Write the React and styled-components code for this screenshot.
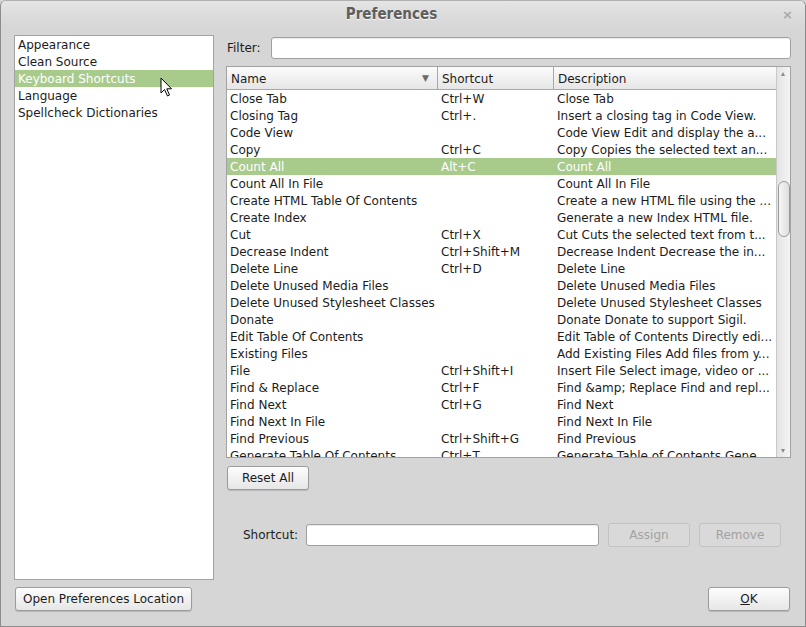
import React from "react";
import styled, { createGlobalStyle } from "styled-components";

const GlobalStyle = createGlobalStyle`
  html, body {
    margin: 0;
    padding: 0;
    background: #d6d6d6;
  }
  * {
    box-sizing: border-box;
  }
`;

const Window = styled.div`
  position: relative;
  width: 806px;
  height: 627px;
  background: #d6d6d6;
  border: 1px solid #8c8c8c;
  border-top-color: #b0b0b0;
  border-radius: 6px 6px 0 0;
  font-family: "DejaVu Sans", sans-serif;
  font-size: 12px;
  color: #1c1c1c;
  display: flex;
  flex-direction: column;
  overflow: hidden;
`;

const TitleBar = styled.div`
  height: 26px;
  flex: none;
  display: flex;
  align-items: center;
  justify-content: center;
  position: relative;
  background: linear-gradient(#e4e4e4, #d6d6d6);
`;

const Title = styled.div`
  font-family: "DejaVu Sans Condensed", "DejaVu Sans", sans-serif;
  font-stretch: condensed;
  font-weight: bold;
  font-size: 15px;
  color: #5e5e5e;
  text-shadow: 0 1px 0 #f4f4f4;
  margin-right: 23px;
`;

const Close = styled.div`
  position: absolute;
  right: 12px;
  top: 7px;
  font-size: 13px;
  color: #a8a8a8;
  font-weight: bold;
  line-height: 1;
`;

const Body = styled.div`
  flex: 1;
  display: flex;
  flex-direction: column;
  padding: 8px 14px 15px 13px;
`;

const Top = styled.div`
  display: flex;
  gap: 12px;
  height: 545px;
`;

const SideList = styled.div`
  width: 200px;
  flex: none;
  background: #fff;
  border: 1px solid #a2a2a2;
`;

const Row = styled.div`
  height: 17px;
  padding-top: 2px;
  line-height: 15px;
  padding-left: ${(p) => p.$pad ?? 3}px;
  white-space: nowrap;
  background: ${(p) => (p.$selected ? "#a8cb8b" : "transparent")};
  color: ${(p) => (p.$selected ? "#fff" : "inherit")};
  display: ${(p) => (p.$grid ? "grid" : "block")};
  grid-template-columns: 211px 116px 1fr;
`;

const Cell = styled.div`
  padding-left: 3px;
  overflow: hidden;
  white-space: nowrap;
`;

const Right = styled.div`
  flex: 1;
  display: flex;
  flex-direction: column;
`;

const FilterRow = styled.div`
  display: flex;
  align-items: center;
  height: 24px;
  padding-left: 1px;
  padding-top: 1px;
`;

const Label = styled.span`
  width: ${(p) => p.$w}px;
  flex: none;
`;

const Input = styled.div`
  height: 22px;
  width: ${(p) => (p.$w ? p.$w + "px" : "auto")};
  flex: ${(p) => (p.$w ? "none" : "1")};
  background: #fff;
  border: 1px solid #a0a0a0;
  border-radius: 3px;
  box-shadow: inset 0 1px 1px rgba(0, 0, 0, 0.08);
`;

const Table = styled.div`
  margin-top: 7px;
  height: 392px;
  border: 1px solid #a2a2a2;
  background: #fff;
  display: flex;
  overflow: hidden;
`;

const TableMain = styled.div`
  flex: 1;
  overflow: hidden;
`;

const Header = styled.div`
  display: grid;
  grid-template-columns: 211px 116px 1fr;
  height: 23px;
  background: linear-gradient(#fbfbfb, #e6e6e6);
  border-bottom: 1px solid #a8a8a8;
`;

const HeadCell = styled.div`
  position: relative;
  padding-left: 4px;
  padding-top: 1px;
  line-height: 22px;
  border-right: ${(p) => (p.$last ? "none" : "1px solid #a8a8a8")};
`;

const SortArrow = styled.span`
  position: absolute;
  right: 8px;
  top: 0;
  font-size: 9px;
  color: #6a6a6a;
`;

const Scrollbar = styled.div`
  width: 14px;
  flex: none;
  border-left: 1px solid #c8c8c8;
  background: linear-gradient(90deg, #e4e4e4, #f4f4f4);
  position: relative;
`;

const ScrollArrow = styled.div`
  position: absolute;
  left: 4px;
  ${(p) => (p.$down ? "bottom: 4px;" : "top: 5px;")}
  width: 0;
  height: 0;
  border-left: 2.5px solid transparent;
  border-right: 2.5px solid transparent;
  ${(p) =>
    p.$down
      ? "border-top: 4px solid #8a8a8a;"
      : "border-bottom: 4px solid #8a8a8a;"}
`;

const Thumb = styled.div`
  position: absolute;
  left: 1px;
  top: 114px;
  width: 12px;
  height: 56px;
  border: 1px solid #9a9a9a;
  border-radius: 6px;
  background: linear-gradient(90deg, #f6f6f6, #dedede);
`;

const Button = styled.div`
  height: 24px;
  width: ${(p) => p.$w}px;
  flex: none;
  display: flex;
  align-items: center;
  justify-content: center;
  border: 1px solid ${(p) => (p.$disabled ? "#c2c2c2" : "#9c9c9c")};
  border-radius: 3px;
  background: ${(p) =>
    p.$disabled ? "#d9d9d9" : "linear-gradient(#fdfdfd, #e6e6e6)"};
  color: ${(p) => (p.$disabled ? "#a2a2a2" : "#1c1c1c")};
  box-shadow: ${(p) => (p.$disabled ? "none" : "0 1px 1px rgba(0,0,0,0.15)")};
`;

const ResetRow = styled.div`
  margin-top: 8px;
  padding-left: 1px;
`;

const ShortcutRow = styled.div`
  margin-top: 33px;
  display: flex;
  align-items: center;
  padding-left: 17px;
  gap: 9px;
`;

const Bottom = styled.div`
  margin-top: 7px;
  display: flex;
  justify-content: space-between;
  padding-left: 1px;
  padding-right: 1px;
`;

const Cursor = styled.svg`
  position: absolute;
  left: 159px;
  top: 76px;
`;

const rows = [
  ["Close Tab", "Ctrl+W", "Close Tab"],
  ["Closing Tag", "Ctrl+.", "Insert a closing tag in Code View."],
  ["Code View", "", "Code View Edit and display the a..."],
  ["Copy", "Ctrl+C", "Copy Copies the selected text an..."],
  ["Count All", "Alt+C", "Count All"],
  ["Count All In File", "", "Count All In File"],
  ["Create HTML Table Of Contents", "", "Create a new HTML file using the ..."],
  ["Create Index", "", "Generate a new Index HTML file."],
  ["Cut", "Ctrl+X", "Cut Cuts the selected text from t..."],
  ["Decrease Indent", "Ctrl+Shift+M", "Decrease Indent Decrease the in..."],
  ["Delete Line", "Ctrl+D", "Delete Line"],
  ["Delete Unused Media Files", "", "Delete Unused Media Files"],
  ["Delete Unused Stylesheet Classes", "", "Delete Unused Stylesheet Classes"],
  ["Donate", "", "Donate Donate to support Sigil."],
  ["Edit Table Of Contents", "", "Edit Table of Contents Directly edi..."],
  ["Existing Files", "", "Add Existing Files Add files from y..."],
  ["File", "Ctrl+Shift+I", "Insert File Select image, video or ..."],
  ["Find & Replace", "Ctrl+F", "Find &amp; Replace Find and repl..."],
  ["Find Next", "Ctrl+G", "Find Next"],
  ["Find Next In File", "", "Find Next In File"],
  ["Find Previous", "Ctrl+Shift+G", "Find Previous"],
  ["Generate Table Of Contents", "Ctrl+T", "Generate Table of Contents Gene..."],
];

const sections = [
  "Appearance",
  "Clean Source",
  "Keyboard Shortcuts",
  "Language",
  "Spellcheck Dictionaries",
];

export default function App() {
  return (
    <>
      <GlobalStyle />
      <Window>
        <TitleBar>
          <Title>Preferences</Title>
          <Close>×</Close>
        </TitleBar>
        <Body>
          <Top>
            <SideList>
              {sections.map((s) => (
                <Row key={s} $selected={s === "Keyboard Shortcuts"}>
                  {s}
                </Row>
              ))}
            </SideList>
            <Right>
              <FilterRow>
                <Label $w={44}>Filter:</Label>
                <Input />
              </FilterRow>
              <Table>
                <TableMain>
                  <Header>
                    <HeadCell>
                      Name<SortArrow>▼</SortArrow>
                    </HeadCell>
                    <HeadCell>Shortcut</HeadCell>
                    <HeadCell $last>Description</HeadCell>
                  </Header>
                  {rows.map((r) => (
                    <Row key={r[0]} $grid $pad={0} $selected={r[0] === "Count All"}>
                      <Cell>{r[0]}</Cell>
                      <Cell>{r[1]}</Cell>
                      <Cell>{r[2]}</Cell>
                    </Row>
                  ))}
                </TableMain>
                <Scrollbar>
                  <ScrollArrow />
                  <Thumb />
                  <ScrollArrow $down />
                </Scrollbar>
              </Table>
              <ResetRow>
                <Button $w={82}>Reset All</Button>
              </ResetRow>
              <ShortcutRow>
                <Label $w={54}>Shortcut:</Label>
                <Input $w={293} />
                <Button $w={82} $disabled>Assign</Button>
                <Button $w={82} $disabled>Remove</Button>
              </ShortcutRow>
            </Right>
          </Top>
          <Bottom>
            <Button $w={177}>Open Preferences Location</Button>
            <Button $w={82}>
              <span>
                <u>O</u>K
              </span>
            </Button>
          </Bottom>
        </Body>
        <Cursor width="14" height="22" viewBox="0 0 14 22">
          <path
            d="M1 1 L1 16 L4.5 12.5 L7.5 19 L9.5 18 L6.8 11.8 L11.5 11.8 Z"
            fill="#fff"
            stroke="#000"
            strokeWidth="1"
            strokeLinejoin="round"
          />
        </Cursor>
      </Window>
    </>
  );
}
